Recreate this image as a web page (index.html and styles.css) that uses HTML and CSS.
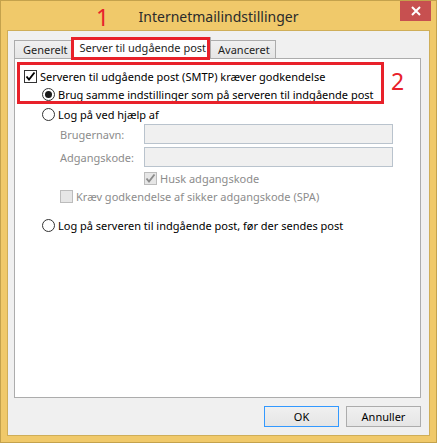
FILE: index.html
```html
<!DOCTYPE html>
<html lang="da">
<head>
  <meta charset="UTF-8" />
  <title>Internetmailindstillinger</title>
  <link rel="stylesheet" href="styles.css">
</head>
<body>

  <div class="window">
    <div class="titlebar">
      <span class="title">Internetmailindstillinger</span>
      <span class="close">
        <svg width="10" height="10" viewBox="0 0 10 10"><path d="M1 1 L9 9 M9 1 L1 9" stroke="#fff" stroke-width="2"/></svg>
      </span>
    </div>

    <div class="client">
      <div class="tabs">
        <div class="tab">Generelt</div>
        <div class="tab active">Server til udgående post</div>
        <div class="tab">Avanceret</div>
      </div>

      <div class="panel">
        <div class="row r-auth">
          <span class="check"><svg width="11" height="11" viewBox="0 0 11 11"><path d="M1.5 5.5 L4 8.5 L9.5 1.5" fill="none" stroke="#000" stroke-width="1.9"/></svg></span>
          Serveren til udgående post (SMTP) kræver godkendelse
        </div>
        <div class="row lvl1">
          <span class="radio on"></span>
          Brug samme indstillinger som på serveren til indgående post
        </div>
        <div class="row lvl1 r-logon">
          <span class="radio"></span>
          Log på ved hjælp af
        </div>
        <div class="field lvl2 f-user">
          <span class="label">Brugernavn:</span>
          <span class="input"></span>
        </div>
        <div class="field lvl2 f-pass">
          <span class="label">Adgangskode:</span>
          <span class="input"></span>
        </div>
        <div class="row lvl3 dim">
          <span class="check off"><svg width="11" height="11" viewBox="0 0 11 11"><path d="M1.5 5.5 L4 8.5 L9.5 1.5" fill="none" stroke="#8c8c8c" stroke-width="1.9"/></svg></span>
          Husk adgangskode
        </div>
        <div class="row lvl2 dim">
          <span class="check off"></span>
          Kræv godkendelse af sikker adgangskode (SPA)
        </div>
        <div class="row lvl1 r-before">
          <span class="radio"></span>
          Log på serveren til indgående post, før der sendes post
        </div>
      </div>

      <div class="buttons">
        <button class="btn default">OK</button>
        <button class="btn">Annuller</button>
      </div>
    </div>

    <!-- red annotations drawn over the dialog -->
    <span class="mark mark-1">1</span>
    <span class="frame frame-tab"></span>
    <span class="frame frame-opts"></span>
    <span class="mark mark-2">2</span>
  </div>

</body>
</html>
```

FILE: styles.css
```css
body {
  margin: 0;
  font-family: "Noto Sans", "Open Sans", sans-serif;
  font-size: 11px;
  color: #000;
}

.window {
  position: relative;
  width: 437px;
  height: 443px;
  box-sizing: border-box;
  border: 1px solid #c4a24c;
  background: #f0c96a;
  display: flex;
  flex-direction: column;
}

.titlebar {
  height: 29px;
  display: grid;
  grid-template-columns: 1fr auto 1fr;
}
.title {
  grid-column: 2;
  align-self: center;
  font-size: 14px;
  color: #2b2b2b;
  padding-top: 1px;
}
.close {
  grid-column: 3;
  justify-self: end;
  align-self: start;
  width: 31px;
  height: 20px;
  margin-right: 5px;
  background: #c75050;
  display: flex;
  align-items: center;
  justify-content: center;
}

.client {
  flex: 1;
  margin: 0 6px 6px;
  border: 1px solid #cfae58;
  background: #f0f0f0;
  padding: 6px 8px 8px 6px;
  display: flex;
  flex-direction: column;
}

.tabs {
  display: flex;
  align-items: flex-end;
  height: 21px;
}
.tab {
  height: 18px;
  box-sizing: border-box;
  padding: 0 5px 0 7px;
  border: 1px solid #acacac;
  border-bottom: none;
  background: linear-gradient(#f0f0f0, #e5e5e5);
  line-height: 17px;
  color: #1e1e1e;
}
.tab:first-child {
  padding: 0 5px 0 8px;
}
.tab + .tab {
  margin-left: -1px;
}
.tab.active {
  height: 22px;
  margin-bottom: -1px;
  position: relative;
  padding: 0 4px 0 6px;
  background: #fff;
  line-height: 19px;
}

.panel {
  flex: 1;
  background: #fff;
  border: 1px solid #acacac;
  padding: 8px 9px 0;
}

.row {
  height: 18px;
  display: flex;
  align-items: center;
}
.lvl1 { padding-left: 18px; }
.lvl2 { padding-left: 36px; }
.lvl3 { padding-left: 120px; }

.r-logon { margin-top: 2px; }
.r-before { margin-top: 11px; }

.check {
  width: 13px;
  height: 13px;
  box-sizing: border-box;
  border: 1px solid #333;
  background: #fff;
  margin-right: 3px;
  display: flex;
  align-items: center;
  justify-content: center;
}
.check.off {
  border-color: #bcbcbc;
  background: #e6e6e6;
}

.radio {
  width: 13px;
  height: 13px;
  box-sizing: border-box;
  border: 1px solid #333;
  border-radius: 50%;
  background: #fff;
  margin-right: 3px;
  display: flex;
  align-items: center;
  justify-content: center;
}
.radio.on::after {
  content: "";
  width: 7px;
  height: 7px;
  border-radius: 50%;
  background: #1a1a1a;
}

.dim {
  color: #8c8c8c;
}

.field {
  display: flex;
  align-items: center;
  color: #8c8c8c;
}
.f-user { margin-top: 1px; }
.f-pass { margin-top: 3px; margin-bottom: 2px; }
.label {
  width: 84px;
}
.input {
  width: 249px;
  height: 20px;
  box-sizing: border-box;
  border: 1px solid #b9c3cd;
  background: #f0f0f0;
}

.buttons {
  display: flex;
  justify-content: flex-end;
  gap: 7px;
  margin-top: 8px;
}
.btn {
  width: 75px;
  height: 21px;
  font-family: inherit;
  font-size: 11px;
  color: #000;
  border: 1px solid #acacac;
  background: linear-gradient(#f0f0f0, #e5e5e5);
  padding: 0;
}
.btn.default {
  border-color: #3399ff;
}

.mark {
  position: absolute;
  color: #e8212a;
  font-size: 23px;
  line-height: 1;
}
.mark-1 { left: 95px; top: 5px; }
.mark-2 { left: 390px; top: 69px; }

.frame {
  position: absolute;
  border: 3px solid #e8212a;
  box-sizing: border-box;
}
.frame-tab { left: 70px; top: 36px; width: 139px; height: 23px; }
.frame-opts { left: 16px; top: 61px; width: 367px; height: 42px; }
```
